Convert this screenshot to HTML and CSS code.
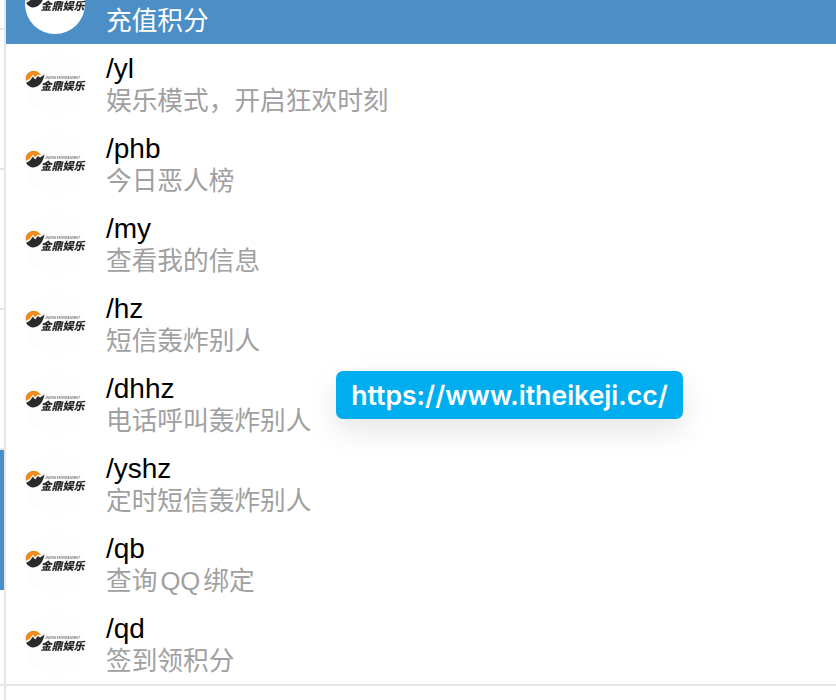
FILE: index.html
```html
<!DOCTYPE html>
<html lang="zh-CN">
<head>
    <meta charset="UTF-8">
    <meta name="viewport" content="width=device-width, initial-scale=1.0">
    <title>指令列表</title>
    <link rel="stylesheet" href="styles.css">
</head>
<body>
    <svg class="defs" width="0" height="0">
        <symbol id="logo" viewBox="0 0 60 60">
            <path class="logo-sun" d="M1 27 A8 8 0 0 1 16 21.5 L13 20.5 L10 23.5 L8 20.5 L5 24.5 Z"/>
            <path class="logo-hill" d="M1 29 L5 26.5 L8 22.5 L10 25.5 L13 22 L15 23.5 L19.5 20.5 Q18 29 13 32 Q6 36 1 29 Z"/>
            <text class="logo-en" x="20" y="25" textLength="35" lengthAdjust="spacingAndGlyphs">JINDING ENTERTAINMENT</text>
            <text class="logo-cn" x="15.5" y="36">金鼎娱乐</text>
        </symbol>
    </svg>

    <div class="page">
        <div class="side">
            <div class="side-item"></div>
            <div class="side-item"></div>
            <div class="side-item"></div>
            <div class="side-item"></div>
            <div class="side-item active"></div>
            <div class="side-item last"></div>
        </div>

        <div class="list">
            <div class="row selected">
                <div class="avatar"><svg><use href="#logo"/></svg></div>
                <div class="info"><div class="cmd">/cz</div><div class="desc">充值积分</div></div>
            </div>
            <div class="row">
                <div class="avatar"><svg><use href="#logo"/></svg></div>
                <div class="info"><div class="cmd">/yl</div><div class="desc">娱乐模式，开启狂欢时刻</div></div>
            </div>
            <div class="row">
                <div class="avatar"><svg><use href="#logo"/></svg></div>
                <div class="info"><div class="cmd">/phb</div><div class="desc">今日恶人榜</div></div>
            </div>
            <div class="row">
                <div class="avatar"><svg><use href="#logo"/></svg></div>
                <div class="info"><div class="cmd">/my</div><div class="desc">查看我的信息</div></div>
            </div>
            <div class="row">
                <div class="avatar"><svg><use href="#logo"/></svg></div>
                <div class="info"><div class="cmd">/hz</div><div class="desc">短信轰炸别人</div></div>
            </div>
            <div class="row">
                <div class="avatar"><svg><use href="#logo"/></svg></div>
                <div class="info"><div class="cmd">/dhhz</div><div class="desc">电话呼叫轰炸别人</div></div>
            </div>
            <div class="row">
                <div class="avatar"><svg><use href="#logo"/></svg></div>
                <div class="info"><div class="cmd">/yshz</div><div class="desc">定时短信轰炸别人</div></div>
            </div>
            <div class="row">
                <div class="avatar"><svg><use href="#logo"/></svg></div>
                <div class="info"><div class="cmd">/qb</div><div class="desc">查询<span class="latin">QQ</span>绑定</div></div>
            </div>
            <div class="row">
                <div class="avatar"><svg><use href="#logo"/></svg></div>
                <div class="info"><div class="cmd">/qd</div><div class="desc">签到领积分</div></div>
            </div>
        </div>
    </div>

    <div class="link-tip">https://www.itheikeji.cc/</div>
</body>
</html>
```

FILE: styles.css
```css
html, body {
    height: 100%;
}
body {
    margin: 0;
    overflow: hidden;
    background-color: #fff;
    font-family: "Liberation Sans", "Noto Sans CJK SC", sans-serif;
}
.defs {
    display: block;
}
.page {
    display: flex;
    height: 700px;
    overflow: hidden;
}
.side {
    flex: none;
    width: 4px;
    margin-top: -110px;
    border-right: 2px solid #e6e6e6;
}
.side-item {
    box-sizing: border-box;
    height: 140px;
    border-bottom: 2px solid #e6e6e6;
}
.side-item.active {
    background-color: #4c8fc7;
    border-bottom: none;
}
.side-item.last {
    height: 96px;
}
.list {
    flex: 1;
    margin-top: -36px;
}
.row {
    display: flex;
    align-items: center;
    gap: 21px;
    height: 80px;
    padding-left: 19px;
}
.list .row:last-child {
    height: 82px;
    box-sizing: border-box;
    border-bottom: 2px solid #e6e6e6;
}
.row.selected {
    background-color: #4c8fc7;
}
.avatar {
    flex: none;
    width: 60px;
    height: 60px;
    border-radius: 50%;
    background-color: #fdfdfd;
}
.row.selected .avatar {
    background-color: #fff;
}
.avatar svg {
    display: block;
    width: 60px;
    height: 60px;
    filter: blur(0.3px);
}
.logo-sun {
    fill: #ee8a1e;
}
.logo-hill {
    fill: #2b2b2b;
}
.logo-en {
    font-family: "Liberation Sans", sans-serif;
    font-size: 2.6px;
    font-style: italic;
    fill: #444;
}
.logo-cn {
    font-family: "Noto Sans CJK SC", sans-serif;
    font-size: 11px;
    font-weight: 900;
    font-style: italic;
    fill: #262626;
}
.info {
    padding-top: 2px;
    line-height: 32px;
}
.cmd {
    font-size: 28px;
    color: #000;
}
.desc {
    font-size: 25.7px;
    color: #a0a0a0;
}
.latin {
    margin: 0 3px;
}
.row.selected .cmd,
.row.selected .desc {
    color: #fff;
}
.link-tip {
    position: absolute;
    top: 371px;
    left: 336px;
    box-sizing: border-box;
    width: 347px;
    height: 48px;
    border-radius: 7px;
    background-color: #00aeef;
    box-shadow: 0 12px 30px rgba(0, 0, 0, 0.1);
    color: #fff;
    font-family: Inter, sans-serif;
    font-size: 26.6px;
    font-weight: 600;
    line-height: 48px;
    text-align: center;
    white-space: nowrap;
}
```
